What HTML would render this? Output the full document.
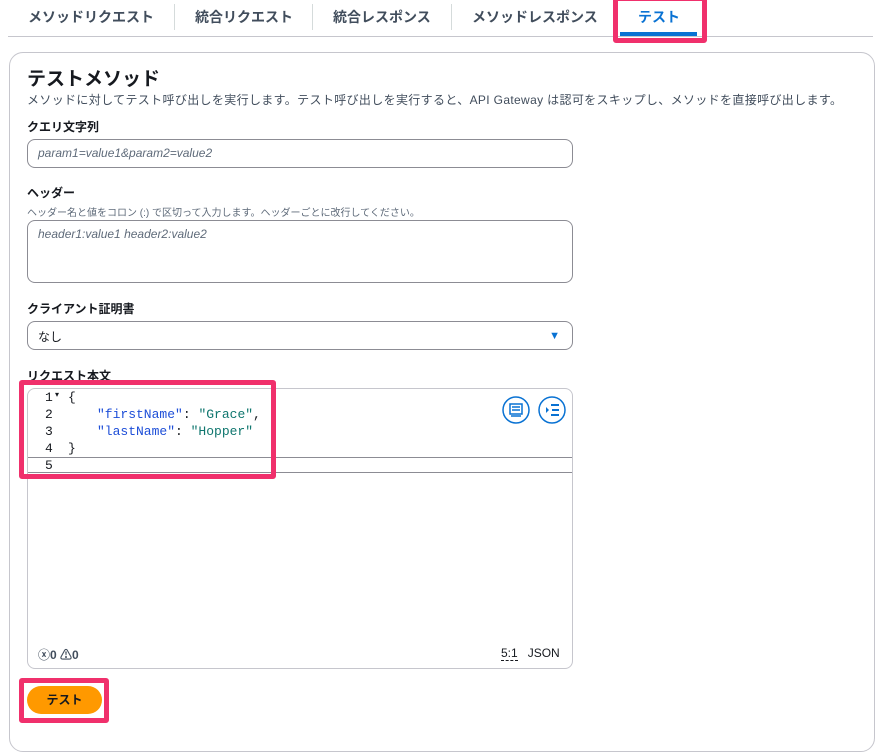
<!DOCTYPE html>
<html><head><meta charset="utf-8"><style>
*{box-sizing:border-box}
body{margin:0;width:881px;height:726px;background:#fff;font-family:"Liberation Sans","Noto Sans CJK JP",sans-serif;color:#16191f;position:relative;overflow:hidden}
.a{position:absolute}
.tab{position:absolute;top:7px;font-size:14px;font-weight:bold;color:#414d5c}
.sep{position:absolute;top:4px;width:1px;height:26px;background:#d5dbdb}
.pink{position:absolute;border:5px solid #f0306c;border-radius:3px}
.lbl{position:absolute;left:27px;font-size:12px;font-weight:bold}
.inp{position:absolute;left:27px;width:546px;border:1px solid #8c8c94;border-radius:8px;font-size:12px;font-style:italic;color:#5f6b7a;padding:8px 10px}
.code{position:absolute;font-family:"Liberation Mono","DejaVu Sans Mono",monospace;font-size:13px;line-height:17px;white-space:pre}
.k{color:#1d4ed8}.s{color:#0f766e}
</style></head><body>
<div class="tab" style="left:28px">メソッドリクエスト</div>
<div class="sep" style="left:174px"></div>
<div class="tab" style="left:195px">統合リクエスト</div>
<div class="sep" style="left:312px"></div>
<div class="tab" style="left:333px">統合レスポンス</div>
<div class="sep" style="left:451px"></div>
<div class="tab" style="left:472px">メソッドレスポンス</div>
<div class="tab" style="left:638px;color:#0972d3">テスト</div>
<div class="a" style="left:8px;top:36px;width:865px;height:1px;background:#c6c6cd"></div>
<div class="a" style="left:620px;top:32px;width:77px;height:4px;background:#0972d3"></div>
<div class="pink" style="left:613px;top:-4px;width:94px;height:47px"></div>

<div class="a" style="left:9px;top:52px;width:866px;height:700px;border:1px solid #c6c6cd;border-radius:14px"></div>
<div class="a" style="left:27px;top:64px;font-size:19px;font-weight:bold">テストメソッド</div>
<div class="a" style="left:27px;top:91px;font-size:12px;color:#414d5c;letter-spacing:0.35px">メソッドに対してテスト呼び出しを実行します。テスト呼び出しを実行すると、API Gateway は認可をスキップし、メソッドを直接呼び出します。</div>
<div class="lbl" style="top:118px">クエリ文字列</div>
<div class="inp" style="top:139px;height:29px;padding-top:6px">param1=value1&amp;param2=value2</div>
<div class="lbl" style="top:184px">ヘッダー</div>
<div class="a" style="left:27px;top:204px;font-size:10px;color:#5f6b7a">ヘッダー名と値をコロン (:) で区切って入力します。ヘッダーごとに改行してください。</div>
<div class="inp" style="top:220px;height:63px;padding-top:6px">header1:value1 header2:value2</div>
<div class="lbl" style="top:300px">クライアント証明書</div>
<div class="inp" style="top:321px;height:29px;padding-top:6px;font-style:normal;color:#16191f">なし<span style="position:absolute;right:12px;top:8px;color:#0972d3;font-size:11px">▼</span></div>
<div class="lbl" style="top:367px">リクエスト本文</div>
<div class="a" style="left:27px;top:388px;width:546px;height:281px;border:1px solid #c6c6cd;border-radius:8px"></div>
<div class="a" style="left:28px;top:457px;width:544px;height:16px;border-top:1px solid #8c8c94;border-bottom:1px solid #8c8c94"></div>
<div class="code" style="left:45px;top:389px">1</div><div class="a" style="left:55px;top:390px;font-size:8px">▾</div><div class="code" style="left:68px;top:389px">{</div>
<div class="code" style="left:45px;top:406px">2</div><div class="code" style="left:97px;top:406px"><span class="k">"firstName"</span>: <span class="s">"Grace"</span>,</div>
<div class="code" style="left:45px;top:423px">3</div><div class="code" style="left:97px;top:423px"><span class="k">"lastName"</span>: <span class="s">"Hopper"</span></div>
<div class="code" style="left:45px;top:440px">4</div><div class="code" style="left:68px;top:440px">}</div>
<div class="code" style="left:45px;top:457px">5</div>
<svg class="a" style="left:501px;top:395px" width="30" height="30"><circle cx="15" cy="15" r="13" fill="none" stroke="#0972d3" stroke-width="1.5"/><rect x="9" y="9" width="12" height="10" fill="none" stroke="#0972d3" stroke-width="1.5"/><path d="M11 12h8M11 15h8M10 21h10" stroke="#0972d3" stroke-width="1.5"/></svg>
<svg class="a" style="left:537px;top:395px" width="30" height="30"><circle cx="15" cy="15" r="13" fill="none" stroke="#0972d3" stroke-width="1.5"/><path d="M9 12l3 3-3 3z" fill="#0972d3"/><path d="M14 10h8M15 15h7M14 20h8" stroke="#0972d3" stroke-width="2"/></svg>
<div class="a" style="left:38px;top:646px;font-size:12px;font-weight:bold;color:#414d5c">ⓧ0 ⚠0</div>
<div class="a" style="left:501px;top:646px;font-size:12px;color:#16191f"><span style="border-bottom:1px dashed #16191f">5:1</span>&nbsp;&nbsp; JSON</div>
<div class="pink" style="left:19px;top:380px;width:257px;height:99px"></div>
<div class="a" style="left:27px;top:686px;width:75px;height:28px;background:#ff9900;border-radius:14px;font-size:12px;font-weight:bold;text-align:center;line-height:28px">テスト</div>
<div class="pink" style="left:19px;top:678px;width:90px;height:45px"></div>
</body></html>
